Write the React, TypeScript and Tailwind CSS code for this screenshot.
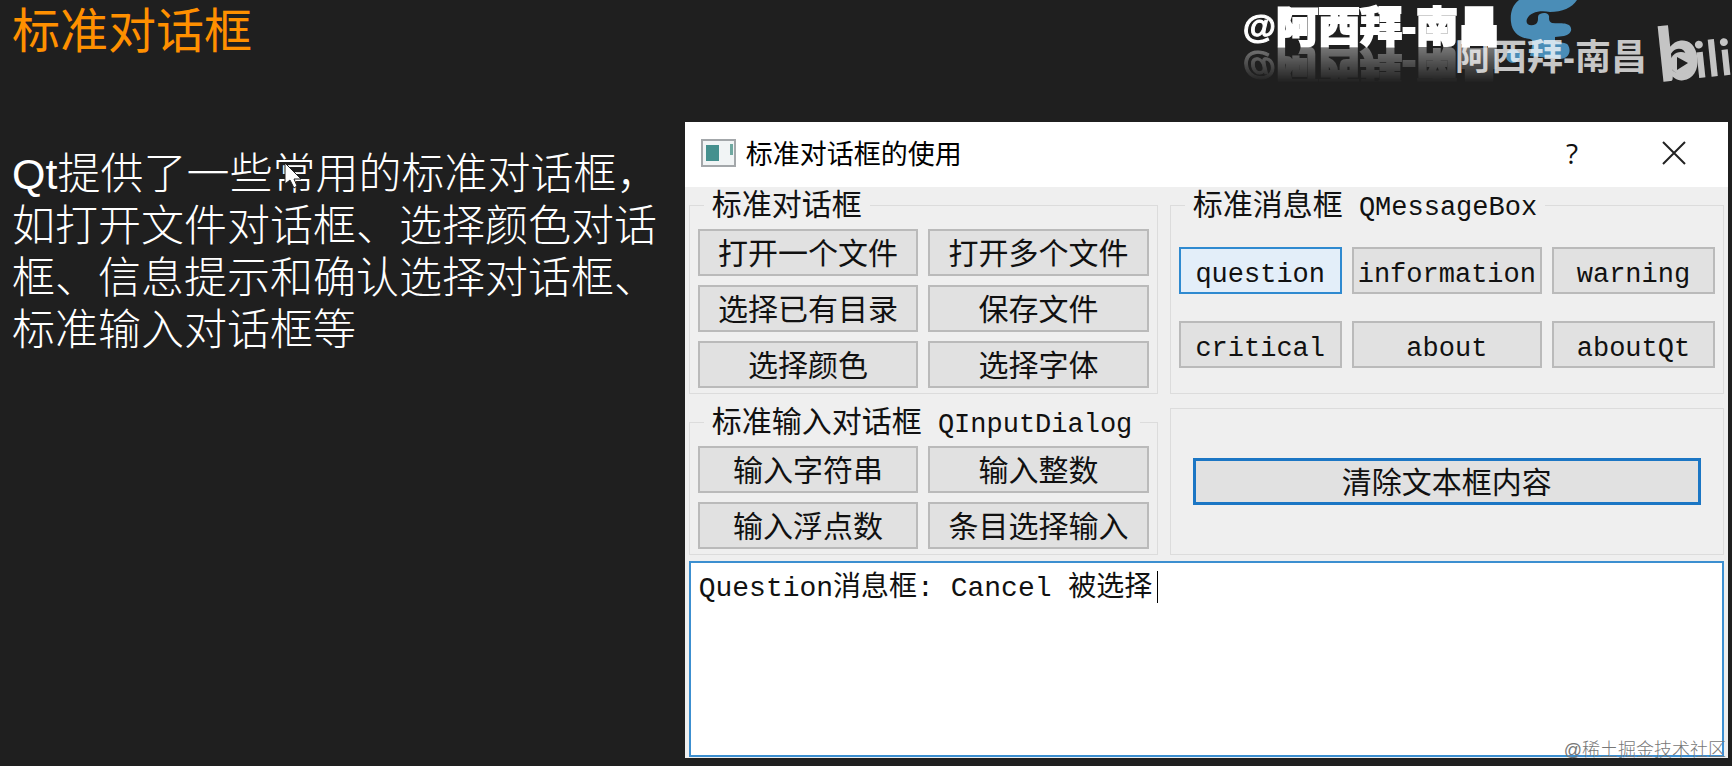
import { useState } from 'react';
import type { ReactNode } from 'react';

const fileButtons = ['打开一个文件', '打开多个文件', '选择已有目录', '保存文件', '选择颜色', '选择字体'];
const inputButtons = ['输入字符串', '输入整数', '输入浮点数', '条目选择输入'];
const messageButtons = ['question', 'information', 'warning', 'critical', 'about', 'aboutQt'];

function GroupBox({ title, latin, className, children }: { title: string; latin?: string; className: string; children: ReactNode }) {
  return (
    <fieldset className={`min-w-0 border border-[#dcdcdc] px-2 pb-[5px] ${className}`}>
      <legend className="ml-1.5 h-7 px-2 text-[30px] leading-8 whitespace-pre">
        {title}
        {latin && <span className="text-[27px]"> {latin}</span>}
      </legend>
      {children}
    </fieldset>
  );
}

function ButtonGrid({ labels }: { labels: string[] }) {
  return (
    <div className="grid grid-cols-2 gap-x-2.5 gap-y-[9px]">
      {labels.map((label) => (
        <button key={label} className="h-[47px] border-2 border-[#bababa] bg-[#e1e1e1] pt-1.5 text-[30px] leading-8 whitespace-nowrap">
          {label}
        </button>
      ))}
    </div>
  );
}

function Watermarks() {
  return (
    <>
      {/* Snake logo */}
      <svg className="absolute top-0 right-[142px] h-[66px] w-[90px]" viewBox="0 0 90 66" fill="#4a8db7">
        <path d="M19 0 C12 5 10 14 11 22 C12 32 19 38 30 39 L32 40 C33 45 31 50 30 56 L60 59 C68 59 72 52 68 45 C66 42 60 43 55 41 L55 37 L64 36 C70 35 73 30 70 26 C66 22 58 24 52 23 C50 22 49 21 49 18 C50 13 44 12 40 14 C36 16 40 20 36 24 C30 27 25 24 27 19 C30 12 40 10 50 12 C62 12 72 8 77 0 Z" />
        <circle cx="13" cy="56" r="7" />
      </svg>
      <div className="absolute top-0 right-[232px] flex items-center text-[42px] leading-[56px] font-black whitespace-nowrap text-white [-webkit-box-reflect:below_-18px_linear-gradient(transparent_20%,rgba(255,255,255,0.5))] [-webkit-text-stroke:2px_white]">
        <span className="pb-1 text-[34px] leading-[52px] font-bold [-webkit-text-stroke:1px_white]">@</span>阿西拜-南昌
      </div>
      <div className="absolute top-8 right-[85px] text-4xl leading-[52px] font-bold whitespace-nowrap text-white/75">阿西拜-南昌</div>
      <svg className="absolute top-0 right-0 h-[90px] w-[92px] overflow-visible" viewBox="0 0 92 90" fill="#c4c4c4">
        <g transform="rotate(-6 30 80)" fontFamily="Lato, sans-serif">
          <text x="19" y="81" fontSize="75" fontWeight="900">b</text>
          <text x="56" y="81" fontSize="50" fontWeight="700">ili</text>
        </g>
        <circle cx="41" cy="63" r="11" />
        <path d="M37 57 L48 63 L37 70 Z" fill="#1f1f1f" />
      </svg>
    </>
  );
}

export default function App() {
  const [active, setActive] = useState('question');
  const [text, setText] = useState('Question消息框: Cancel 被选择');

  return (
    <div className="relative flex min-h-screen flex-col overflow-hidden bg-[#1f1f1f] pb-2 font-['Liberation_Sans','Noto_Sans_CJK_SC',sans-serif]">
      <header className="h-[122px] px-3 pt-0.5">
        <h1 className="text-5xl leading-[60px] text-[#ff9000]">标准对话框</h1>
      </header>
      <Watermarks />

      <main className="grid flex-1 grid-cols-[21fr_32fr] pr-1">
        <p className="pt-[26px] pl-3 text-[43px] leading-[52px] font-light whitespace-nowrap text-white">
          Qt提供了一些常用的标准对话框，
          <br />
          如打开文件对话框、选择颜色对话
          <br />
          框、信息提示和确认选择对话框、
          <br />
          标准输入对话框等
        </p>

        {/* Dialog window */}
        <section className="flex min-w-0 flex-col bg-[#efefef] text-[#111] font-['Liberation_Mono','Noto_Sans_CJK_SC',monospace]">
          <div className="flex h-[65px] items-center bg-white pr-[42px] pb-1 pl-4">
            <svg className="h-7 w-[35px]" viewBox="0 0 35 28">
              <rect x="1" y="1" width="33" height="26" fill="#f1f4f5" stroke="#a3a7aa" strokeWidth="2" />
              <rect x="5" y="6" width="13" height="16" fill="#45908e" />
              <rect x="29" y="5" width="3" height="11" fill="#6fa8a0" />
            </svg>
            <h2 className="ml-2.5 flex-1 font-['Noto_Sans_CJK_SC',sans-serif] text-[27px] leading-9 text-black">标准对话框的使用</h2>
            <button className="mr-[76px] w-7 font-['Open_Sans',sans-serif] text-[28px] font-medium" aria-label="帮助">?</button>
            <button aria-label="关闭">
              <svg className="h-6 w-6" viewBox="0 0 24 24" stroke="#222" strokeWidth="2">
                <path d="M1 1 L23 23 M23 1 L1 23" />
              </svg>
            </button>
          </div>

          <div className="grid grid-cols-[11fr_13fr] gap-x-3 gap-y-3.5 pt-1 pr-1 pb-1.5 pl-1">
            <GroupBox title="标准对话框" className="pt-2.5">
              <ButtonGrid labels={fileButtons} />
            </GroupBox>

            <GroupBox title="标准消息框" latin="QMessageBox" className="pt-7">
              <div className="grid grid-cols-[6fr_7fr_6fr] gap-x-2.5 gap-y-[27px]">
                {messageButtons.map((label) => (
                  <button
                    key={label}
                    onClick={() => setActive(label)}
                    className={`h-[47px] border-2 pt-2 text-[27px] leading-8 ${active === label ? 'border-[#2f8ad0] bg-[#e3eef9]' : 'border-[#bababa] bg-[#e1e1e1]'}`}
                  >
                    {label}
                  </button>
                ))}
              </div>
            </GroupBox>

            <GroupBox title="标准输入对话框" latin="QInputDialog" className="pt-2.5">
              <ButtonGrid labels={inputButtons} />
            </GroupBox>

            <div className="flex items-center border border-[#dcdcdc] px-[22px]">
              <button onClick={() => setText('')} className="h-[47px] w-full border-3 border-[#1b76c4] bg-[#e1e1e1] pt-1.5 text-[30px] leading-8">
                清除文本框内容
              </button>
            </div>
          </div>

          <div className="relative mx-1 mb-px flex flex-1">
            <textarea
              aria-label="输出"
              value={text}
              onChange={(e) => setText(e.target.value)}
              className="min-h-[190px] w-full resize-none border-2 border-[#3c8fd0] bg-white px-2 py-2 text-[28px] leading-9 caret-transparent outline-none"
            />
            <span className="absolute top-2.5 left-[468px] h-8 w-px bg-black" />
          </div>
        </section>
      </main>

      {/* Mouse pointer */}
      <svg className="absolute top-[162px] left-[284px] h-7 w-5" viewBox="0 0 20 28">
        <path d="M1 1 V22 L6 18 L10 26 L13 24 L10 17 H17 Z" fill="#fff" stroke="#1f1f1f" />
      </svg>

      <div className="absolute right-1.5 bottom-1 text-lg leading-6 font-light text-[#777]">@稀土掘金技术社区</div>
    </div>
  );
}
